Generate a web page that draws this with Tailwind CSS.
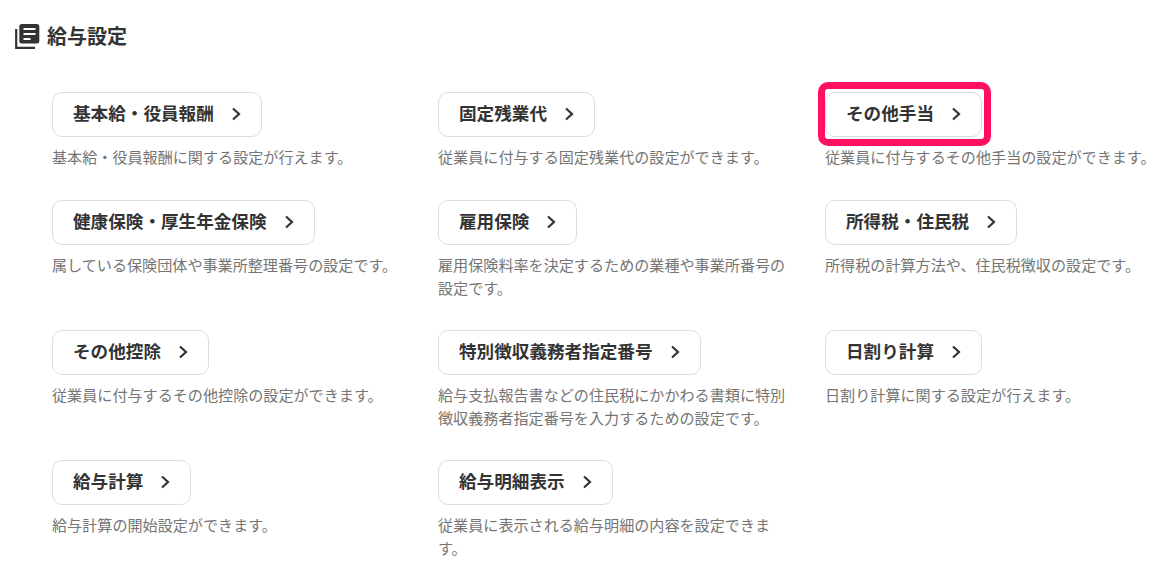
<!DOCTYPE html>
<html lang="ja">
<head>
<meta charset="UTF-8">
<script src="https://cdn.jsdelivr.net/npm/@tailwindcss/browser@4"></script>
<title>給与設定</title>
</head>
<body class="bg-white w-[1176px] h-[576px] overflow-hidden font-['Noto_Sans_CJK_JP','Noto_Sans',sans-serif] text-[#333]">
<div class="pt-[21px] pl-[14px] flex items-center gap-[6px] h-[50px]">
  <svg class="w-[27px] h-[27px]" viewBox="0 0 27 27" fill="none">
    <path d="M2.2 7v18.8H21" stroke="#333" stroke-width="2.2"/>
    <rect x="5.3" y="2" width="20" height="19.5" rx="2.5" fill="#333"/>
    <path d="M9.5 7h12M9.5 12h12M9.5 17h7" stroke="#fff" stroke-width="2"/>
  </svg>
  <h1 class="text-[20px] font-bold leading-none text-[#333]">給与設定</h1>
</div>
<div class="relative grid grid-cols-[386px_387px_340px] pl-[52px] pt-[42px]">
  <div class="h-[108px]">
    <a class="inline-flex items-center h-[45px] pl-[20px] pr-[19px] pb-[2px] gap-[16px] rounded-[10px] border border-[#ddd] bg-white text-[17.6px] font-bold">基本給・役員報酬<svg class="w-[12px] h-[14px]" viewBox="0 0 12 14" fill="none"><path d="M3 1.5l6 5.5-6 5.5" stroke="#333" stroke-width="2.2"/></svg></a>
    <p class="mt-[7.5px] text-[15.1px] leading-[23px] text-[#757575] w-[348px]">基本給・役員報酬に関する設定が行えます。</p>
  </div>
  <div class="h-[108px]">
    <a class="inline-flex items-center h-[45px] pl-[20px] pr-[19px] pb-[2px] gap-[16px] rounded-[10px] border border-[#ddd] bg-white text-[17.6px] font-bold">固定残業代<svg class="w-[12px] h-[14px]" viewBox="0 0 12 14" fill="none"><path d="M3 1.5l6 5.5-6 5.5" stroke="#333" stroke-width="2.2"/></svg></a>
    <p class="mt-[7.5px] text-[15.1px] leading-[23px] text-[#757575] w-[348px]">従業員に付与する固定残業代の設定ができます。</p>
  </div>
  <div class="h-[108px]">
    <a class="inline-flex items-center h-[45px] pl-[20px] pr-[19px] pb-[2px] gap-[16px] rounded-[10px] border border-[#ddd] bg-white text-[17.6px] font-bold">その他手当<svg class="w-[12px] h-[14px]" viewBox="0 0 12 14" fill="none"><path d="M3 1.5l6 5.5-6 5.5" stroke="#333" stroke-width="2.2"/></svg></a>
    <p class="mt-[7.5px] text-[15.1px] leading-[23px] text-[#757575] whitespace-nowrap">従業員に付与するその他手当の設定ができます。</p>
  </div>

  <div class="h-[130px]">
    <a class="inline-flex items-center h-[45px] pl-[20px] pr-[19px] pb-[2px] gap-[16px] rounded-[10px] border border-[#ddd] bg-white text-[17.6px] font-bold">健康保険・厚生年金保険<svg class="w-[12px] h-[14px]" viewBox="0 0 12 14" fill="none"><path d="M3 1.5l6 5.5-6 5.5" stroke="#333" stroke-width="2.2"/></svg></a>
    <p class="mt-[7.5px] text-[15.1px] leading-[23px] text-[#757575] w-[348px]">属している保険団体や事業所整理番号の設定です。</p>
  </div>
  <div class="h-[130px]">
    <a class="inline-flex items-center h-[45px] pl-[20px] pr-[19px] pb-[2px] gap-[16px] rounded-[10px] border border-[#ddd] bg-white text-[17.6px] font-bold">雇用保険<svg class="w-[12px] h-[14px]" viewBox="0 0 12 14" fill="none"><path d="M3 1.5l6 5.5-6 5.5" stroke="#333" stroke-width="2.2"/></svg></a>
    <p class="mt-[7.5px] text-[15.1px] leading-[23px] text-[#757575] w-[348px]">雇用保険料率を決定するための業種や事業所番号の設定です。</p>
  </div>
  <div class="h-[130px]">
    <a class="inline-flex items-center h-[45px] pl-[20px] pr-[19px] pb-[2px] gap-[16px] rounded-[10px] border border-[#ddd] bg-white text-[17.6px] font-bold">所得税・住民税<svg class="w-[12px] h-[14px]" viewBox="0 0 12 14" fill="none"><path d="M3 1.5l6 5.5-6 5.5" stroke="#333" stroke-width="2.2"/></svg></a>
    <p class="mt-[7.5px] text-[15.1px] leading-[23px] text-[#757575] w-[348px]">所得税の計算方法や、住民税徴収の設定です。</p>
  </div>

  <div class="h-[130px]">
    <a class="inline-flex items-center h-[45px] pl-[20px] pr-[19px] pb-[2px] gap-[16px] rounded-[10px] border border-[#ddd] bg-white text-[17.6px] font-bold">その他控除<svg class="w-[12px] h-[14px]" viewBox="0 0 12 14" fill="none"><path d="M3 1.5l6 5.5-6 5.5" stroke="#333" stroke-width="2.2"/></svg></a>
    <p class="mt-[7.5px] text-[15.1px] leading-[23px] text-[#757575] w-[348px]">従業員に付与するその他控除の設定ができます。</p>
  </div>
  <div class="h-[130px]">
    <a class="inline-flex items-center h-[45px] pl-[20px] pr-[19px] pb-[2px] gap-[16px] rounded-[10px] border border-[#ddd] bg-white text-[17.6px] font-bold">特別徴収義務者指定番号<svg class="w-[12px] h-[14px]" viewBox="0 0 12 14" fill="none"><path d="M3 1.5l6 5.5-6 5.5" stroke="#333" stroke-width="2.2"/></svg></a>
    <p class="mt-[7.5px] text-[15.1px] leading-[23px] text-[#757575] w-[348px]">給与支払報告書などの住民税にかかわる書類に特別徴収義務者指定番号を入力するための設定です。</p>
  </div>
  <div class="h-[130px]">
    <a class="inline-flex items-center h-[45px] pl-[20px] pr-[19px] pb-[2px] gap-[16px] rounded-[10px] border border-[#ddd] bg-white text-[17.6px] font-bold">日割り計算<svg class="w-[12px] h-[14px]" viewBox="0 0 12 14" fill="none"><path d="M3 1.5l6 5.5-6 5.5" stroke="#333" stroke-width="2.2"/></svg></a>
    <p class="mt-[7.5px] text-[15.1px] leading-[23px] text-[#757575] w-[348px]">日割り計算に関する設定が行えます。</p>
  </div>

  <div>
    <a class="inline-flex items-center h-[45px] pl-[20px] pr-[19px] pb-[2px] gap-[16px] rounded-[10px] border border-[#ddd] bg-white text-[17.6px] font-bold">給与計算<svg class="w-[12px] h-[14px]" viewBox="0 0 12 14" fill="none"><path d="M3 1.5l6 5.5-6 5.5" stroke="#333" stroke-width="2.2"/></svg></a>
    <p class="mt-[7.5px] text-[15.1px] leading-[23px] text-[#757575] w-[348px]">給与計算の開始設定ができます。</p>
  </div>
  <div>
    <a class="inline-flex items-center h-[45px] pl-[20px] pr-[19px] pb-[2px] gap-[16px] rounded-[10px] border border-[#ddd] bg-white text-[17.6px] font-bold">給与明細表示<svg class="w-[12px] h-[14px]" viewBox="0 0 12 14" fill="none"><path d="M3 1.5l6 5.5-6 5.5" stroke="#333" stroke-width="2.2"/></svg></a>
    <p class="mt-[7.5px] text-[15.1px] leading-[23px] text-[#757575] w-[348px]">従業員に表示される給与明細の内容を設定できます。</p>
  </div>
  <div class="absolute left-[818px] top-[32px] w-[173px] h-[64px] border-[7px] border-[#ff1060] rounded-[10px]"></div>
</div>
</body>
</html>
